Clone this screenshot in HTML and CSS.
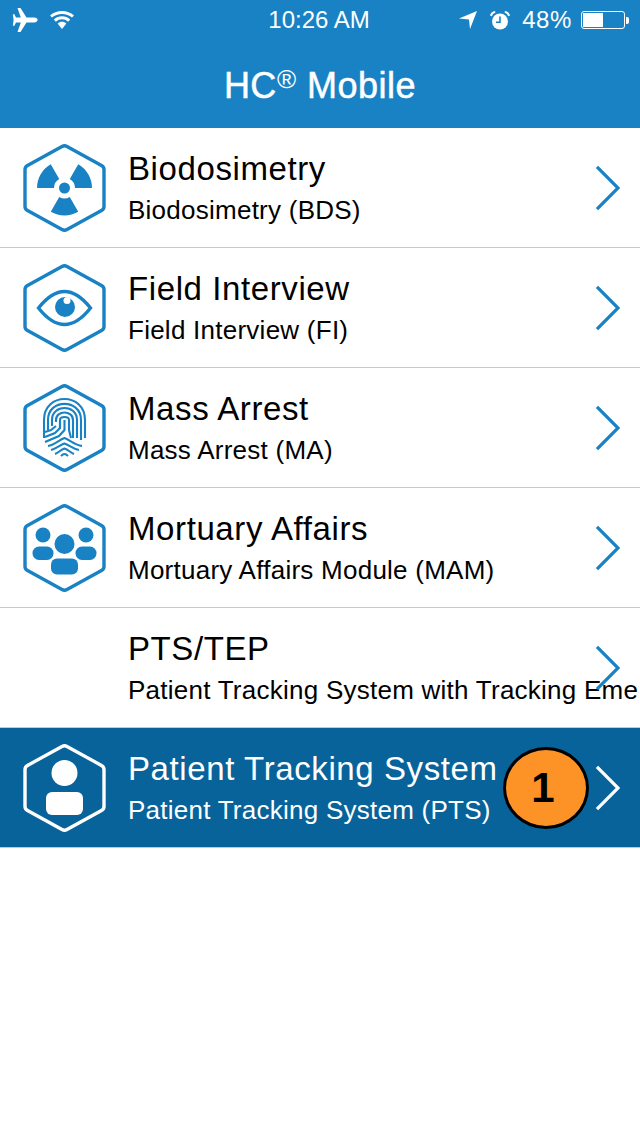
FILE: index.html
```html
<!DOCTYPE html>
<html lang="en">
<head>
    <meta charset="UTF-8">
    <meta name="viewport" content="width=device-width, initial-scale=1.0">
    <title>HC Mobile</title>
    <link rel="stylesheet" href="styles.css">
</head>
<body>
    <header class="app-header">
        <div class="status-bar">
            <div class="status-left">
                <svg class="icon-plane" width="26" height="26" viewBox="0 0 26 26">
                    <path d="M5.5 1 L8.5 1 L14.5 10.6 L22 10.6 C24.6 10.6 25.6 12 25.6 13 C25.6 14 24.6 15.4 22 15.4 L14.5 15.4 L8.5 25 L5.5 25 L8.8 15.4 L4 15.4 L2.4 18.8 L0.8 18.8 L1.6 13 L0.8 7.2 L2.4 7.2 L4 10.6 L8.8 10.6 Z" fill="#fff"/>
                </svg>
                <svg class="icon-wifi" width="24" height="20" viewBox="0 0 24 20">
                    <path d="M1 6.5 C7 1 17 1 23 6.5 M4.8 10.6 C9 6.8 15 6.8 19.2 10.6" fill="none" stroke="#fff" stroke-width="3"/>
                    <path d="M7.6 13.6 C10.2 11.2 13.8 11.2 16.4 13.6 L12 19 Z" fill="#fff"/>
                </svg>
            </div>
            <span class="status-time">10:26 AM</span>
            <div class="status-right">
                <svg class="icon-location" width="18" height="18" viewBox="0 0 18 18">
                    <path d="M0 7.6 L18 0 L11 18 L10 8.4 Z" fill="#fff"/>
                </svg>
                <svg class="icon-alarm" width="20" height="19" viewBox="0 0 20 19">
                    <circle cx="10" cy="10.5" r="8" fill="#fff"/>
                    <path d="M10 5.5 V11.2 H6" fill="none" stroke="#1982c4" stroke-width="1.6"/>
                    <path d="M1 5 C1.4 2.8 3 1.2 5.2 1 M19 5 C18.6 2.8 17 1.2 14.8 1" fill="none" stroke="#fff" stroke-width="2"/>
                </svg>
                <span class="status-battery-text">48%</span>
                <div class="battery">
                    <div class="battery-level"></div>
                </div>
                <div class="battery-tip"></div>
            </div>
        </div>
        <h1 class="app-title">HC<sup>®</sup> Mobile</h1>
    </header>

    <ul class="module-list">
        <li class="module">
            <svg class="module-icon" viewBox="0 0 90 100">
                <path class="hex" d="M42 8.4 Q44.5 7 47 8.4 L81.5 27.4 Q84 28.8 84 31.5 V68.5 Q84 71.2 81.5 72.6 L47 91.6 Q44.5 93 42 91.6 L7.5 72.6 Q5 71.2 5 68.5 V31.5 Q5 28.8 7.5 27.4 Z"/>
                <path class="fill" d="M17 50 A27.5 27.5 0 0 1 30.75 26.2 L39.25 40.9 A10.5 10.5 0 0 0 34 50 Z"/>
                <path class="fill" d="M72 50 A27.5 27.5 0 0 0 58.25 26.2 L49.75 40.9 A10.5 10.5 0 0 1 55 50 Z"/>
                <path class="fill" d="M30.75 73.8 A27.5 27.5 0 0 0 58.25 73.8 L49.75 59.1 A10.5 10.5 0 0 1 39.25 59.1 Z"/>
                <circle class="fill" cx="44.5" cy="50" r="5.5"/>
            </svg>
            <div class="module-text">
                <div class="module-name">Biodosimetry</div>
                <div class="module-desc">Biodosimetry (BDS)</div>
            </div>
            <svg class="chevron" viewBox="0 0 26 48"><path d="M2 2 L24 24 L2 46"/></svg>
        </li>
        <li class="module">
            <svg class="module-icon" viewBox="0 0 90 100">
                <path class="hex" d="M42 8.4 Q44.5 7 47 8.4 L81.5 27.4 Q84 28.8 84 31.5 V68.5 Q84 71.2 81.5 72.6 L47 91.6 Q44.5 93 42 91.6 L7.5 72.6 Q5 71.2 5 68.5 V31.5 Q5 28.8 7.5 27.4 Z"/>
                <path class="line" d="M18.5 50 C28 38 36 33.5 44.5 33.5 C53 33.5 61 38 70.5 50 C61 62 53 66.5 44.5 66.5 C36 66.5 28 62 18.5 50 Z"/>
                <circle class="fill" cx="45" cy="49" r="10"/>
                <circle class="notch" cx="47" cy="42.5" r="3.5"/>
            </svg>
            <div class="module-text">
                <div class="module-name">Field Interview</div>
                <div class="module-desc">Field Interview (FI)</div>
            </div>
            <svg class="chevron" viewBox="0 0 26 48"><path d="M2 2 L24 24 L2 46"/></svg>
        </li>
        <li class="module">
            <svg class="module-icon" viewBox="0 0 90 100">
                <path class="hex" d="M42 8.4 Q44.5 7 47 8.4 L81.5 27.4 Q84 28.8 84 31.5 V68.5 Q84 71.2 81.5 72.6 L47 91.6 Q44.5 93 42 91.6 L7.5 72.6 Q5 71.2 5 68.5 V31.5 Q5 28.8 7.5 27.4 Z"/>
                <g class="print">
                    <path d="M24 60 V42 C24 14 65 14 65 42 V60"/>
                    <path d="M28 52 V42 C28 20.5 61 20.5 61 42 V62"/>
                    <path d="M32 48 V42 C32 26 57 26 57 42 V60"/>
                    <path d="M36 44 V42 C36 32 53 32 53 42 V60"/>
                    <path d="M40 50 V42 C40 38 49 38 49 42 V52 L51 60"/>
                    <path d="M44.5 42 V52 L39 58 L25 64"/>
                    <path d="M40 44 V50 L35 55 L25 59"/>
                    <path d="M36 48 L31 52 L25 54"/>
                    <path d="M28 68 C34 67 39 62 44.5 60 C50 62 55 67 62 68"/>
                    <path d="M31 72 C36 71 40 67 44.5 65.5 C49 67 53 71 59 72"/>
                    <path d="M35 76 C38 75 41 71.5 44.5 70.5 C48 71.5 51 75 54 76"/>
                    <path d="M41 78 C42 77 43.5 76 44.5 76 C45.5 76 47 77 48 78"/>
                </g>
            </svg>
            <div class="module-text">
                <div class="module-name">Mass Arrest</div>
                <div class="module-desc">Mass Arrest (MA)</div>
            </div>
            <svg class="chevron" viewBox="0 0 26 48"><path d="M2 2 L24 24 L2 46"/></svg>
        </li>
        <li class="module">
            <svg class="module-icon" viewBox="0 0 90 100">
                <path class="hex" d="M42 8.4 Q44.5 7 47 8.4 L81.5 27.4 Q84 28.8 84 31.5 V68.5 Q84 71.2 81.5 72.6 L47 91.6 Q44.5 93 42 91.6 L7.5 72.6 Q5 71.2 5 68.5 V31.5 Q5 28.8 7.5 27.4 Z"/>
                <circle class="fill" cx="23" cy="37" r="7.5"/>
                <circle class="fill" cx="66" cy="37" r="7.5"/>
                <circle class="fill" cx="44.5" cy="46" r="10"/>
                <rect class="fill" x="12.5" y="48.5" width="21" height="13.5" rx="6.5"/>
                <rect class="fill" x="55.5" y="48.5" width="21" height="13.5" rx="6.5"/>
                <rect class="fill" x="31" y="60.5" width="27" height="16" rx="6"/>
            </svg>
            <div class="module-text">
                <div class="module-name">Mortuary Affairs</div>
                <div class="module-desc">Mortuary Affairs Module (MAM)</div>
            </div>
            <svg class="chevron" viewBox="0 0 26 48"><path d="M2 2 L24 24 L2 46"/></svg>
        </li>
        <li class="module">
            <div class="module-icon"></div>
            <div class="module-text">
                <div class="module-name">PTS/TEP</div>
                <div class="module-desc">Patient Tracking System with Tracking Eme</div>
            </div>
            <svg class="chevron" viewBox="0 0 26 48"><path d="M2 2 L24 24 L2 46"/></svg>
        </li>
        <li class="module selected">
            <svg class="module-icon" viewBox="0 0 90 100">
                <path class="hex" d="M42 8.4 Q44.5 7 47 8.4 L81.5 27.4 Q84 28.8 84 31.5 V68.5 Q84 71.2 81.5 72.6 L47 91.6 Q44.5 93 42 91.6 L7.5 72.6 Q5 71.2 5 68.5 V31.5 Q5 28.8 7.5 27.4 Z"/>
                <circle class="fill" cx="44.5" cy="35" r="13"/>
                <rect class="fill" x="26" y="54" width="37" height="23" rx="6"/>
            </svg>
            <div class="module-text">
                <div class="module-name">Patient Tracking System</div>
                <div class="module-desc">Patient Tracking System (PTS)</div>
            </div>
            <div class="badge">1</div>
            <svg class="chevron" viewBox="0 0 26 48"><path d="M2 2 L24 24 L2 46"/></svg>
        </li>
    </ul>
</body>
</html>
```

FILE: styles.css
```css
body {
    margin: 0;
    background-color: #fff;
    font-family: "Liberation Sans", Arial, sans-serif;
    color: #000;
}

.app-header {
    height: 128px;
    background-color: #1982c4;
    color: #fff;
}

.status-bar {
    display: flex;
    justify-content: space-between;
    align-items: center;
    height: 40px;
    padding: 0 11px 0 12px;
    position: relative;
    font-size: 24px;
}

.status-left {
    display: flex;
    align-items: center;
    gap: 12px;
}

.status-time {
    position: absolute;
    left: 0;
    right: 2px;
    text-align: center;
}

.status-right {
    display: flex;
    align-items: center;
}

.icon-location {
    margin-right: 13px;
}

.icon-alarm {
    margin-right: 12px;
}

.status-battery-text {
    margin-right: 9px;
    letter-spacing: 0.6px;
}

.battery {
    width: 44px;
    height: 18px;
    border: 1px solid #fff;
    border-radius: 3px;
    padding: 1px;
    box-sizing: border-box;
}

.battery-level {
    width: 20px;
    height: 100%;
    background-color: #fff;
}

.battery-tip {
    width: 3px;
    height: 7px;
    margin-left: 1px;
    background-color: #fff;
    border-radius: 0 2px 2px 0;
}

.app-title {
    margin: 0;
    height: 88px;
    line-height: 92px;
    text-align: center;
    font-size: 36px;
    font-weight: normal;
    letter-spacing: 0.5px;
    -webkit-text-stroke: 0.5px #fff;
}

.app-title sup {
    font-size: 26px;
    line-height: 0;
    vertical-align: 10px;
    -webkit-text-stroke: 0;
}

.module-list {
    list-style: none;
    margin: 0;
    padding: 0;
}

.module {
    position: relative;
    display: flex;
    align-items: center;
    height: 120px;
    box-sizing: border-box;
    padding-left: 20px;
    border-bottom: 1px solid #c8c8c8;
    overflow: hidden;
}

.module-icon {
    flex: none;
    width: 90px;
    height: 100px;
    margin-right: 18px;
}

.hex {
    fill: none;
    stroke: #1982c4;
    stroke-width: 3.4;
}

.fill {
    fill: #1982c4;
}

.notch {
    fill: #fff;
}

.line {
    fill: none;
    stroke: #1982c4;
    stroke-width: 3.4;
}

.print path {
    fill: none;
    stroke: #1982c4;
    stroke-width: 2.1;
}

.module-text {
    white-space: nowrap;
}

.module-name {
    font-size: 33px;
    line-height: 40px;
    letter-spacing: 0.6px;
}

.module-desc {
    font-size: 26px;
    line-height: 34px;
    margin-top: 4px;
    letter-spacing: 0.25px;
}

.chevron {
    position: absolute;
    right: 20px;
    top: 37px;
    width: 25px;
    height: 46px;
    fill: none;
    stroke: #1982c4;
    stroke-width: 3.4;
}

.selected {
    background-color: #07639a;
    color: #fff;
}

.selected .hex,
.selected .chevron {
    stroke: #fff;
}

.selected .fill {
    fill: #fff;
}

.badge {
    position: absolute;
    left: 503px;
    top: 19px;
    display: flex;
    align-items: center;
    justify-content: center;
    width: 86px;
    height: 82px;
    box-sizing: border-box;
    border: 3px solid #000;
    border-radius: 50%;
    padding-right: 6px;
    background-color: #fd9226;
    color: #000;
    font-size: 42px;
    font-weight: bold;
}
```
